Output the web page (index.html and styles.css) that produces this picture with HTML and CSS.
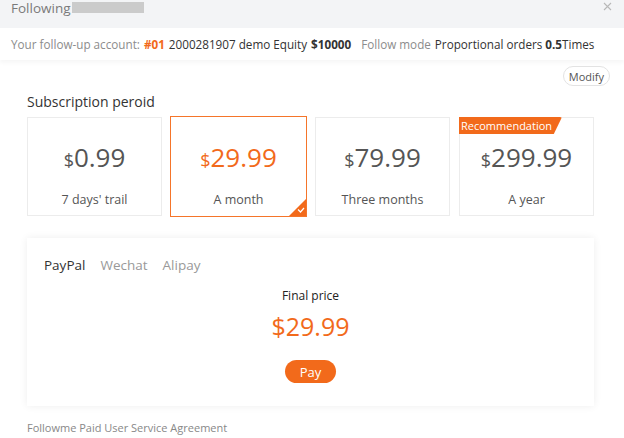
FILE: index.html
```html
<!DOCTYPE html>
<html>
<head>
<meta charset="utf-8">
<link rel="stylesheet" href="styles.css">
</head>
<body>
<div class="dialog">
  <div class="header">
    <span class="title">Following</span><span class="redact"></span>
    <svg class="close" width="9" height="9" viewBox="0 0 9 9"><path d="M1 1 L8 8 M8 1 L1 8" stroke="#b8b8b8" stroke-width="1.1" fill="none"/></svg>
  </div>
  <div class="account">
    <span class="lbl">Your follow-up account:</span>
    <b class="orange">#01</b>
    <span>2000281907 demo Equity</span>
    <b>$10000</b>
    <span class="lbl sp">Follow mode</span>
    <span>Proportional orders <b>0.5</b>Times</span>
  </div>
  <div class="modify-row"><button class="modify">Modify</button></div>
  <div class="content">
    <div class="sec-title">Subscription peroid</div>
    <div class="cards">
      <div class="card">
        <div class="price"><span class="cur">$</span>0.99</div>
        <div class="period">7 days' trail</div>
      </div>
      <div class="card active">
        <div class="price"><span class="cur">$</span>29.99</div>
        <div class="period">A month</div>
        <span class="check"><svg width="8" height="6" viewBox="0 0 8 6"><path d="M1 2.5 L3.5 5 L7 1" fill="none" stroke="#fff" stroke-width="1.2"/></svg></span>
      </div>
      <div class="card">
        <div class="price"><span class="cur">$</span>79.99</div>
        <div class="period">Three months</div>
      </div>
      <div class="card">
        <span class="badge">Recommendation</span>
        <div class="price"><span class="cur">$</span>299.99</div>
        <div class="period">A year</div>
      </div>
    </div>
    <div class="pay-panel">
      <div class="tabs">
        <span class="tab on">PayPal</span>
        <span class="tab">Wechat</span>
        <span class="tab">Alipay</span>
      </div>
      <div class="final">
        <div class="final-lbl">Final price</div>
        <div class="final-price">$29.99</div>
        <button class="pay">Pay</button>
      </div>
    </div>
    <div class="agreement">Followme Paid User Service Agreement</div>
  </div>
</div>
</body>
</html>
```
FILE: styles.css
```css
* { box-sizing: border-box; }
html, body { margin: 0; padding: 0; background: #fff; }
body { font-family: "Open Sans", "Noto Sans", sans-serif; color: #333; width: 624px; height: 438px; overflow: hidden; }
.dialog { width: 624px; }
.header { height: 28px; background: #f3f4f6; display: flex; align-items: flex-start; padding: 0 0 0 11px; position: relative; }
.title { font-size: 13.5px; color: #7a7a7a; line-height: 17px; margin-top: 0; }
.redact { display: inline-block; width: 72px; height: 11px; background: #cbcbcb; margin-top: 2px; margin-left: 1px; }
.close { position: absolute; right: 12px; top: 2px; }
.account { height: 32px; display: flex; align-items: center; gap: 4px; padding-left: 11px; font-size: 11.7px; color: #333; white-space: nowrap; box-shadow: 0 3px 4px rgba(0,0,0,0.035); }
.account .lbl { color: #8c8c8c; }
.account .sp { margin-left: 6px; }
.account b { font-weight: 700; }
.orange { color: #f26a1b; }
.modify-row { display: flex; justify-content: flex-end; padding: 6px 14px 0 0; }
.modify { font-family: inherit; font-size: 11px; color: #555; background: #fff; border: 1px solid #e3e3e3; border-radius: 10px; height: 20px; padding: 0 5px; line-height: 17px; }
.content { padding: 0 30px 0 27px; }
.sec-title { font-size: 14px; color: #333; margin-top: 6px; line-height: 20px; }
.cards { display: grid; grid-template-columns: repeat(4, 135px); column-gap: 9px; margin-top: 5px; }
.card { height: 99px; border: 1px solid #ececec; display: flex; flex-direction: column; align-items: center; position: relative; color: #555; }
.card.active { border-color: transparent; box-shadow: 0 0 0 1px #f5752a; color: #f26a1b; }
.price { font-size: 26px; line-height: 32px; margin-top: 23px; letter-spacing: 0; }
.cur { font-size: 18px; }
.period { font-size: 12.5px; color: #555; margin-top: 15px; }
.check { position: absolute; right: -1px; bottom: -1px; width: 0; height: 0; border-style: solid; border-width: 0 0 17px 17px; border-color: transparent transparent #f26a1b transparent; }
.check svg { position: absolute; left: -9px; top: 8px; }
.badge { position: absolute; left: -1px; top: -1px; height: 17px; padding: 0 10px 0 2px; background: #f26a1b; color: #fff; font-size: 11px; line-height: 17px; clip-path: polygon(0 0, 100% 0, 92% 100%, 0 100%); border-radius: 0 2px 0 0; }
.pay-panel { margin-top: 22px; height: 168px; background: #fff; box-shadow: 0 0 8px rgba(0,0,0,0.07); padding: 18px 17px 0 17px; }
.tabs { display: flex; gap: 15px; font-size: 13.5px; color: #999; }
.tab.on { color: #333; }
.final { display: flex; flex-direction: column; align-items: center; margin-top: 13px; }
.final-lbl { font-size: 12px; color: #222; }
.final-price { font-size: 25px; color: #f26a1b; margin-top: 5px; line-height: 34px; }
.pay { margin-top: 17px; width: 51px; height: 23px; border: none; border-radius: 12px; background: #f26a1b; color: #fff; font-family: inherit; font-size: 13px; padding: 0; }
.agreement { font-size: 11px; color: #888; margin-top: 14px; }
```
